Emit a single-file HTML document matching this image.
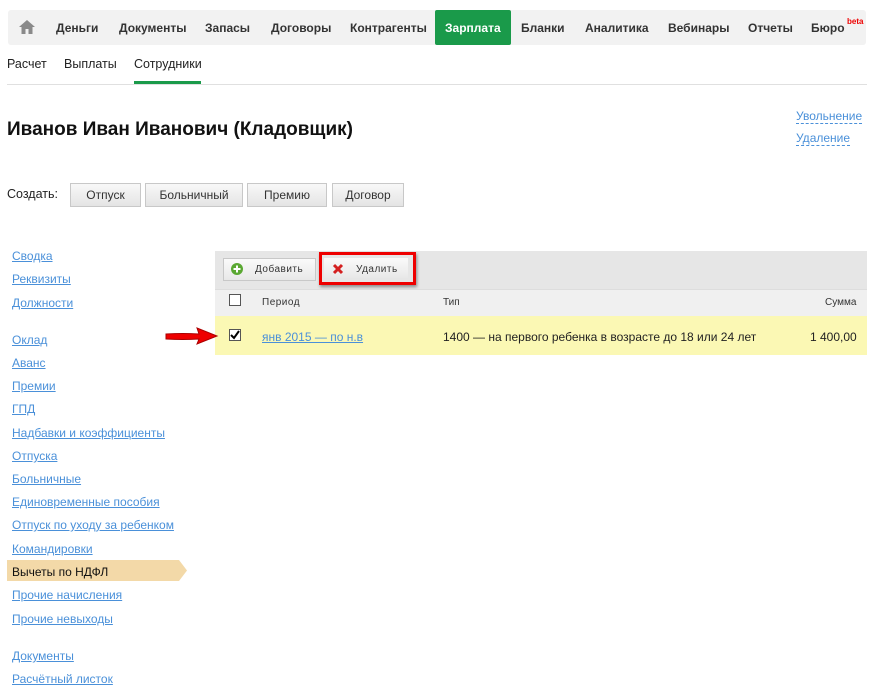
<!DOCTYPE html>
<html><head><meta charset="utf-8"><style>
body{margin:0;width:877px;height:699px;background:#fff;font-family:"Liberation Sans",Arial,sans-serif;position:relative;overflow:hidden;color:#222}
.a{position:absolute;white-space:nowrap}
.nav{left:8px;top:10px;width:858px;height:35px;background:#f2f2f2;border-radius:3px}
.ni{top:21px;font-size:12px;font-weight:bold;color:#333}
.sub{top:57px;font-size:12.5px;color:#222}
.lk{color:#4a90d9;text-decoration:underline;font-size:12px;left:12px}
.btn{top:183px;height:22px;background:linear-gradient(#f8f8f8,#e4e4e4);border:1px solid #c8c8c8;font-size:12px;line-height:22px;text-align:center;color:#333}
.dl{color:#4a90d9;font-size:12px;border-bottom:1px dashed #4a90d9;line-height:14px}
</style></head><body>
<div class="a nav"></div>
<svg class="a" style="left:18px;top:19px" width="18" height="16" viewBox="0 0 18 16"><path d="M9 1L1 8h2.5v7h4v-5h3v5h4V8H17z" fill="#8a8a8a"/></svg>
<div class="a ni" style="left:56px">Деньги</div>
<div class="a ni" style="left:119px">Документы</div>
<div class="a ni" style="left:205px">Запасы</div>
<div class="a ni" style="left:271px">Договоры</div>
<div class="a ni" style="left:350px">Контрагенты</div>
<div class="a" style="left:435px;top:10px;width:76px;height:35px;background:#1a9a4a;border-radius:2px"></div>
<div class="a ni" style="left:445px;color:#fff">Зарплата</div>
<div class="a ni" style="left:521px">Бланки</div>
<div class="a ni" style="left:585px">Аналитика</div>
<div class="a ni" style="left:668px">Вебинары</div>
<div class="a ni" style="left:748px">Отчеты</div>
<div class="a ni" style="left:811px">Бюро</div>
<div class="a" style="left:847px;top:17px;font-size:8px;color:#e00;font-weight:bold">beta</div>
<div class="a sub" style="left:7px">Расчет</div>
<div class="a sub" style="left:64px">Выплаты</div>
<div class="a sub" style="left:134px">Сотрудники</div>
<div class="a" style="left:134px;top:81px;width:67px;height:3px;background:#1a9a4a"></div>
<div class="a" style="left:7px;top:84px;width:860px;height:1px;background:#e0e0e0"></div>
<div class="a" style="left:7px;top:119px;font-size:19px;font-weight:bold;color:#111">Иванов Иван Иванович (Кладовщик)</div>
<div class="a dl" style="left:796px;top:109px">Увольнение</div>
<div class="a dl" style="left:796px;top:131px">Удаление</div>
<div class="a" style="left:7px;top:187px;font-size:12.5px">Создать:</div>
<div class="a btn" style="left:70px;width:69px">Отпуск</div>
<div class="a btn" style="left:145px;width:96px">Больничный</div>
<div class="a btn" style="left:247px;width:78px">Премию</div>
<div class="a btn" style="left:332px;width:70px">Договор</div>
<div class="a lk" style="top:249px">Сводка</div>
<div class="a lk" style="top:272px">Реквизиты</div>
<div class="a lk" style="top:296px">Должности</div>
<div class="a lk" style="top:333px">Оклад</div>
<div class="a lk" style="top:356px">Аванс</div>
<div class="a lk" style="top:379px">Премии</div>
<div class="a lk" style="top:402px">ГПД</div>
<div class="a lk" style="top:426px">Надбавки и коэффициенты</div>
<div class="a lk" style="top:449px">Отпуска</div>
<div class="a lk" style="top:472px">Больничные</div>
<div class="a lk" style="top:495px">Единовременные пособия</div>
<div class="a lk" style="top:518px">Отпуск по уходу за ребенком</div>
<div class="a lk" style="top:542px">Командировки</div>
<svg class="a" style="left:7px;top:560px" width="180" height="21"><path d="M0 0H172L180 10.5 172 21H0z" fill="#f3d9a8"/></svg>
<div class="a" style="left:12px;top:565px;font-size:12px;color:#111">Вычеты по НДФЛ</div>
<div class="a lk" style="top:588px">Прочие начисления</div>
<div class="a lk" style="top:612px">Прочие невыходы</div>
<div class="a lk" style="top:649px">Документы</div>
<div class="a lk" style="top:672px">Расчётный листок</div>
<div class="a" style="left:215px;top:251px;width:652px;height:38px;background:#e6e6e6"></div>
<div class="a" style="left:223px;top:258px;width:91px;height:21px;background:linear-gradient(#fafafa,#e8e8e8);border:1px solid #c8c8c8"></div>
<svg class="a" style="left:230px;top:262px" width="14" height="14"><circle cx="7" cy="7" r="6" fill="#5aa832"/><path d="M7 3.5v7M3.5 7h7" stroke="#fff" stroke-width="2"/></svg>
<div class="a" style="left:255px;top:264px;font-size:10px;color:#333;letter-spacing:.5px">Добавить</div>
<div class="a" style="left:319px;top:252px;width:91px;height:27px;border:3px solid #e00;box-shadow:1px 2px 3px rgba(0,0,0,.4)"></div>
<div class="a" style="left:324px;top:258px;width:84px;height:20px;background:linear-gradient(#fafafa,#e8e8e8)"></div>
<svg class="a" style="left:332px;top:263px" width="12" height="12"><path d="M2 2l8 8M10 2l-8 8" stroke="#d42020" stroke-width="3"/></svg>
<div class="a" style="left:356px;top:264px;font-size:10px;color:#333;letter-spacing:.5px">Удалить</div>
<div class="a" style="left:215px;top:289px;width:652px;height:27px;background:#f0f0f0;border-top:1px solid #ddd"></div>
<div class="a" style="left:229px;top:294px;width:10px;height:10px;border:1px solid #555;background:#fff"></div>
<div class="a" style="left:262px;top:297px;font-size:10px;color:#333;letter-spacing:.5px">Период</div>
<div class="a" style="left:443px;top:297px;font-size:10px;color:#333">Тип</div>
<div class="a" style="left:825px;top:297px;font-size:10px;color:#333">Сумма</div>
<div class="a" style="left:215px;top:316px;width:652px;height:39px;background:#fbf8b4"></div>
<div class="a" style="left:229px;top:329px;width:10px;height:10px;border:1px solid #555;background:#fff"></div>
<svg class="a" style="left:230px;top:330px" width="10" height="10"><path d="M1 5l3 3 5-7" stroke="#000" stroke-width="2" fill="none"/></svg>
<div class="a" style="left:262px;top:330px;font-size:12px;color:#4a90d9;text-decoration:underline">янв 2015 — по н.в</div>
<div class="a" style="left:443px;top:330px;font-size:12px;color:#222">1400 — на первого ребенка в возрасте до 18 или 24 лет</div>
<div class="a" style="left:810px;top:330px;font-size:12px;color:#222">1 400,00</div>
<svg class="a" style="left:163px;top:325px" width="56" height="22"><path d="M3 9Q20 8 36 9L34 3 54 11 34 19 36 14Q20 15 3 14Z" fill="#e00" stroke="#a00" stroke-width="1"/></svg>
</body></html>
